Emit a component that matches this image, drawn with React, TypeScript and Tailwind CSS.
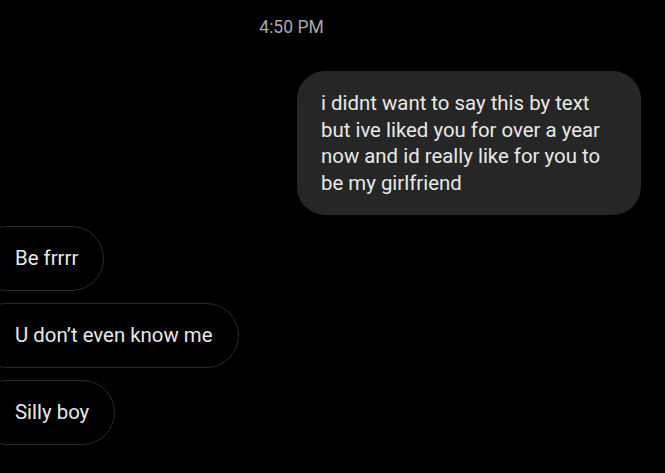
import React from "react";

const received = ["Be frrrr", "U don\u2019t even know me", "Silly boy"];

export default function App() {
  return (
    <div className="w-[665px] h-[473px] bg-black overflow-hidden font-['Roboto',sans-serif] text-[#e8e8e8]">
      {/* timestamp */}
      <div className="pt-[16px] text-center text-[17.5px] leading-[22px] text-[#a8a8a8] pr-[82px]">
        4:50 PM
      </div>

      {/* sent */}
      <div className="flex justify-end pr-[24px] mt-[33px]">
        <div className="w-[344px] bg-[#262626] rounded-[28px] pl-[24px] pr-[14px] pt-[19px] pb-[19px] text-[20.4px] leading-[26.5px]">
          i didnt want to say this by text
          <br />
          but ive liked you for over a year
          <br />
          now and id really like for you to
          <br />
          be my girlfriend
        </div>
      </div>

      {/* received */}
      <div className="flex flex-col items-start gap-[12px] mt-[11px] ml-[-26px]">
        {received.map((t) => (
          <div
            key={t}
            className="h-[65px] flex items-center rounded-full border border-[#2a2a2a] pl-[40px] pr-[25px] text-[20.4px]"
          >
            {t}
          </div>
        ))}
      </div>
    </div>
  );
}
